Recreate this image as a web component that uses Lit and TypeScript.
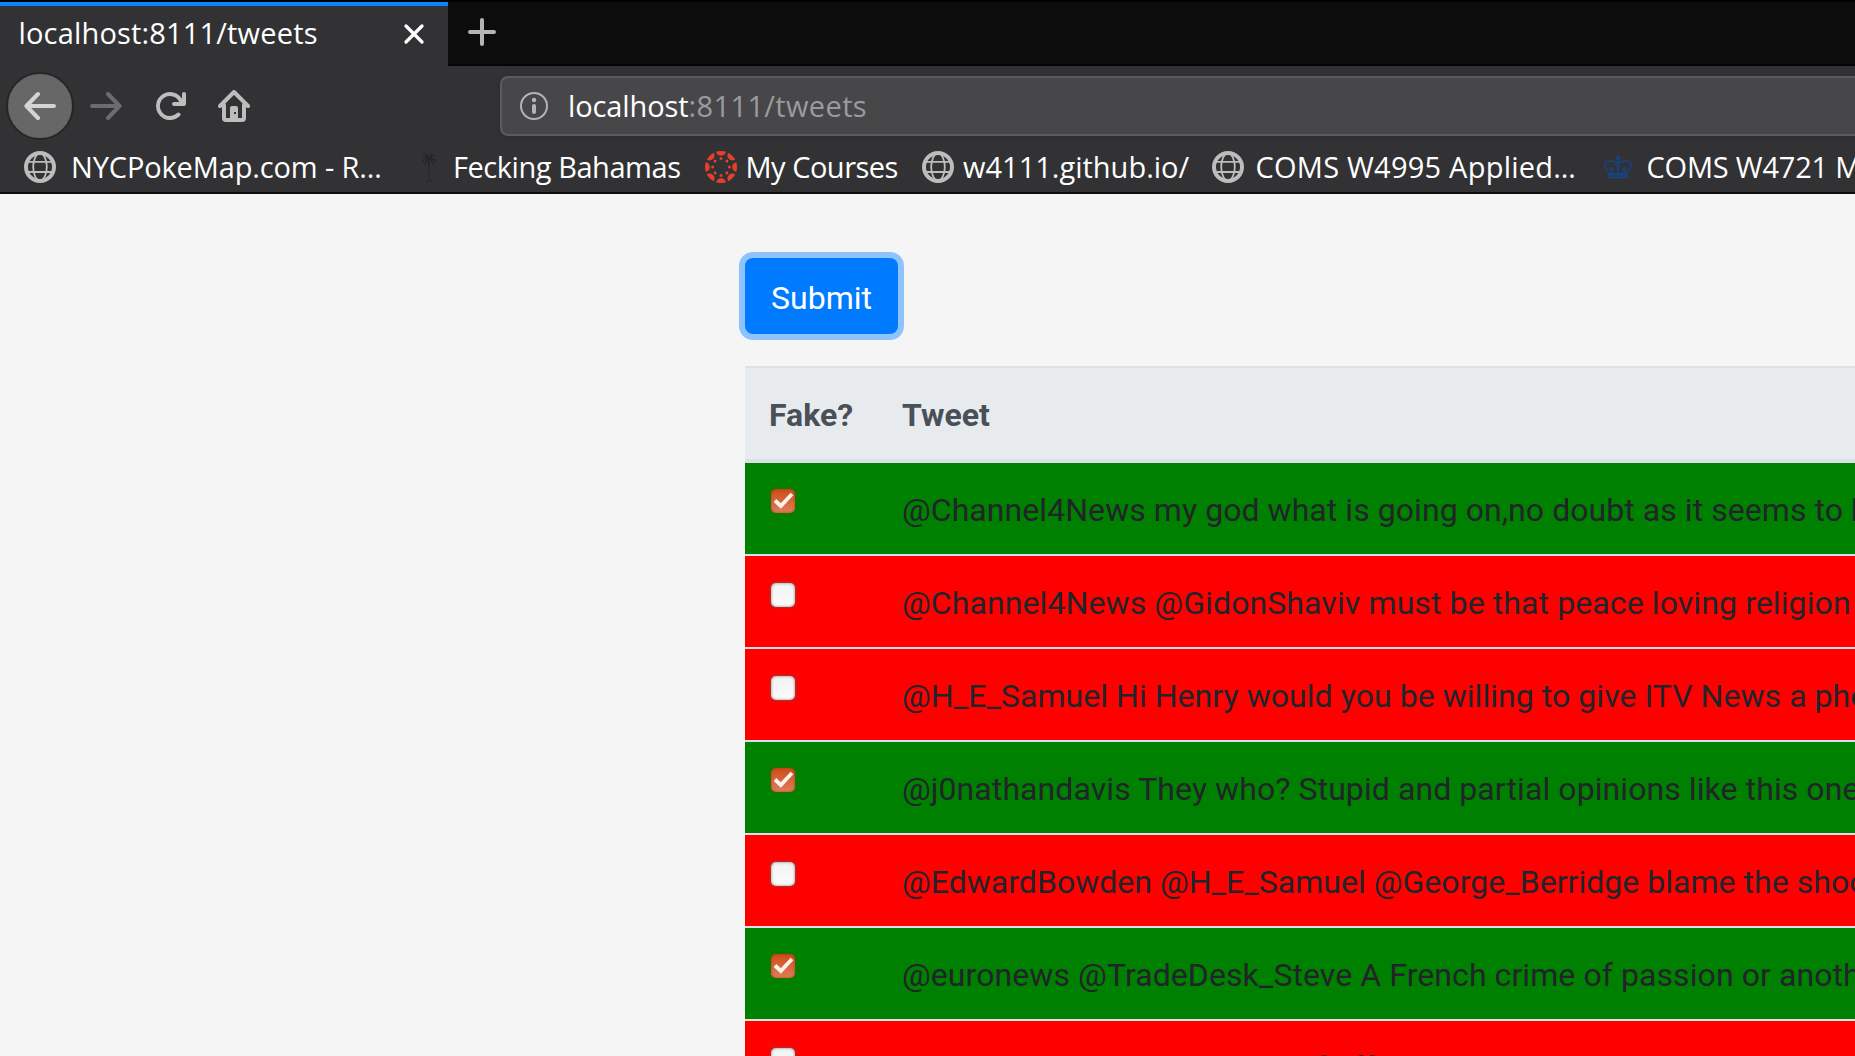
import { LitElement, html, svg, css, TemplateResult } from "lit";
import { customElement, property } from "lit/decorators.js";
import { classMap } from "lit/directives/class-map.js";

const globe = svg`
  <g fill="none" stroke="#bdbdbd">
    <circle cx="8" cy="8" r="7" stroke-width="2"/>
    <ellipse cx="8" cy="8" rx="3.4" ry="6.8" stroke-width=".9"/>
    <path d="M1.6 5.4h12.8M1.6 10.5h12.8" stroke-width=".9"/>
  </g>`;

const palm = svg`
  <g fill="none" stroke="#242425" stroke-linecap="round">
    <path d="M8 4.2C6.6 2.6 5.4 2.4 4.6 3.2M8 4.2C7 3.6 5.4 4 4.8 5.4M8 4.2C7 4.6 6 5.6 6 6.8M8 4.2C8 5 7.8 6 8.2 7M8 4.2C9 4.6 10.2 5.4 10.4 6.6M8 4.2C9.2 3.6 10.6 3.8 11.4 5M8 4.2C9 2.6 10.4 2 11.4 2.8M8 4.2C7.4 2.8 6.8 1.6 6 1.4M8 4.2C8.4 2.8 9 1.6 9.8 1.3" stroke-width=".6" stroke-dasharray="1 .4"/>
    <path d="M8.1 4.6C7.9 8 7.9 11 8.3 14.4M6.6 15.4Q8.2 13.6 9.8 15.4" stroke-width=".4"/>
  </g>`;

const around = [0, 45, 90, 135, 180, 225, 270, 315];
const ring = svg`
  <defs><clipPath id="disc"><circle cx="8" cy="8" r="8"/></clipPath></defs>
  <g fill="#e63f2e">
    <g clip-path="url(#disc)">
      ${around.map((a) => svg`<circle cx="8" cy="-.1" r="2.5" transform="rotate(${a} 8 8)"/>`)}
    </g>
    ${around.map((a) => svg`<circle cx="8" cy="3.8" r=".75" transform="rotate(${a} 8 8)"/>`)}
  </g>`;

const crown = svg`
  <g fill="none" stroke="#17447f" stroke-linejoin="round">
    <path d="M3.7 11.3C1.6 8.8 1 6.9 1.7 5.9c1-1.3 4.3-1.2 6.3.5 2-1.7 5.3-1.8 6.3-.5.7 1 .1 2.9-2 5.4z" stroke-width=".8"/>
    <path d="M8 5v6.2M6.7 7.7h2.6M4.8 8v3M3.6 9.2h2.4M11.2 8v3M10 9.2h2.4" stroke-width=".9"/>
    <path d="M8 2v3M6.8 3.4h2.4" stroke-width="1"/>
    <path d="M2.8 11.9h10.4M2.8 13.3h10.4" stroke-width="1"/>
  </g>`;

const arrow = svg`
  <path d="M2 8h13M7 2 1.2 8 7 14" fill="none" stroke="currentColor" stroke-width="2"
    stroke-linecap="round" stroke-linejoin="round"/>`;

const reload = svg`
  <path fill="currentColor" d="M15 1a1 1 0 0 0-1 1v2.418A6.995 6.995 0 1 0 8 15a6.954 6.954 0 0 0 4.95-2.05 1 1 0 0 0-1.414-1.414A5.019 5.019 0 1 1 12.549 6H10a1 1 0 0 0 0 2h5a1 1 0 0 0 1-1V2a1 1 0 0 0-1-1z"/>`;

const home = svg`
  <path fill="none" stroke="currentColor" stroke-width="2" stroke-linecap="round" stroke-linejoin="round"
    d="M1 8 8 1l7 7M3 7.5V14a1 1 0 0 0 1 1h8a1 1 0 0 0 1-1V7.5"/>
  <path fill="currentColor" fill-rule="evenodd" d="M6 15V9a1 1 0 0 1 1-1h2a1 1 0 0 1 1 1v6zM8 11v1h1v-1z"/>`;

const icon = (body: unknown) => html`<svg class="icon" viewBox="0 0 16 16" aria-hidden="true">${body}</svg>`;

interface Bookmark {
  label: string;
  icon: unknown;
  width: number;
  gap: number;
  spacing: number;
}

const bookmarks: Bookmark[] = [
  { label: "NYCPokeMap.com - R…", icon: globe, width: 389, gap: 15, spacing: -0.14 },
  { label: "Fecking Bahamas", icon: palm, width: 292, gap: 8, spacing: -0.45 },
  { label: "My Courses", icon: ring, width: 217, gap: 8.5, spacing: -0.5 },
  { label: "w4111.github.io/", icon: globe, width: 290, gap: 9, spacing: 0 },
  { label: "COMS W4995 Applied…", icon: globe, width: 390, gap: 11.5, spacing: 0.24 },
  { label: "COMS W4721 M", icon: crown, width: 253, gap: 12.5, spacing: -0.2 },
];

@customElement("browser-chrome")
export class BrowserChrome extends LitElement {
  static styles = css`
    :host {
      display: block;
      font: 29px/40px "Open Sans", "Noto Sans", sans-serif;
      color: #fff;
      background: #323234;
      white-space: nowrap;
    }
    .icon { display: block; width: 32px; height: 32px; flex: none; }
    .tabs {
      display: flex;
      align-items: stretch;
      height: 64px;
      padding-top: 2px;
      background: linear-gradient(#000 2px, #0c0c0d 2px, #0c0c0d 64px, #050506 64px);
    }
    .tab {
      box-sizing: border-box;
      width: 448px;
      display: flex;
      align-items: center;
      justify-content: space-between;
      padding: 0 22px 6px 18.5px;
      border-top: 4px solid #0a84ff;
      background: #323234;
      letter-spacing: 0.17px;
    }
    .close { width: 24px; height: 24px; margin-top: 1px; }
    .plus { width: 32px; height: 32px; margin: 14px 0 0 18px; }
    .nav { display: flex; align-items: center; height: 80px; color: #bdbdbd; }
    .back {
      box-sizing: border-box;
      width: 68px;
      height: 68px;
      margin-left: 6px;
      display: grid;
      place-items: center;
      border: 2px solid #262627;
      border-radius: 50%;
      background: #676768;
      color: #d4d4d5;
    }
    .forward { margin-left: 16px; color: #6c6c6e; transform: scaleX(-1); }
    .reload { margin-left: 32px; }
    .home { margin-left: 32px; }
    .url {
      box-sizing: border-box;
      flex: 1;
      height: 60px;
      margin-left: 250px;
      padding-left: 18px;
      display: flex;
      align-items: center;
      border: 2px solid #5b5b5d;
      border-right: 0;
      border-radius: 8px 0 0 8px;
      background: #474749;
      box-shadow: 0 1px 6px rgba(0, 0, 0, 0.15);
      color: #9b9b9d;
    }
    .info { width: 28px; height: 28px; margin-right: 20px; }
    .host { color: #fff; letter-spacing: -0.1px; }
    .path { letter-spacing: 0.36px; }
    .bookmarks {
      box-sizing: border-box;
      height: 48px;
      padding: 0 0 4px 24px;
      display: flex;
      align-items: center;
      overflow: hidden;
      border-bottom: 2px solid #0c0c0d;
    }
    .bookmark { display: flex; align-items: center; flex: none; overflow: hidden; }
  `;

  render() {
    return html`
      <div class="tabs">
        <div class="tab">
          <span>localhost:8111/tweets</span>
          <svg class="close" viewBox="0 0 24 24">
            <path d="M4 4l16 16M20 4 4 20" stroke="#fff" stroke-width="3.3" stroke-linecap="round"/>
          </svg>
        </div>
        <svg class="plus" viewBox="0 0 32 32">
          <path d="M16 4v24M4 16h24" stroke="#b4b4b5" stroke-width="4" stroke-linecap="round"/>
        </svg>
      </div>
      <div class="nav">
        <div class="back">${icon(arrow)}</div>
        <div class="forward">${icon(arrow)}</div>
        <div class="reload">${icon(reload)}</div>
        <div class="home">${icon(home)}</div>
        <div class="url">
          <svg class="info" viewBox="0 0 28 28">
            <circle cx="14" cy="14" r="13" fill="none" stroke="#b4b4b5" stroke-width="2"/>
            <circle cx="14" cy="8" r="2.2" fill="#b4b4b5"/>
            <path d="M14 14v6" stroke="#b4b4b5" stroke-width="4" stroke-linecap="round"/>
          </svg>
          <span class="host">localhost</span><span class="path">:8111/tweets</span>
        </div>
      </div>
      <div class="bookmarks">
        ${bookmarks.map(
          (b) => html`<div class="bookmark" style="width:${b.width}px;gap:${b.gap}px;letter-spacing:${b.spacing}px">
            ${icon(b.icon)}<span>${b.label}</span>
          </div>`
        )}
      </div>
    `;
  }
}

@customElement("fake-check")
export class FakeCheck extends LitElement {
  @property({ type: Boolean }) checked = false;

  static styles = css`
    :host { display: block; width: 24px; height: 24px; }
    .box {
      box-sizing: border-box;
      width: 24px;
      height: 24px;
      margin-top: 1px;
      border-radius: 5px;
      background: linear-gradient(#f2f2f2, #fcfcfc);
      box-shadow: 0 0 2px 1px rgba(110, 90, 80, 0.6), inset 0 0 3px rgba(80, 80, 80, 0.7);
    }
    .on {
      margin-top: 0;
      background: linear-gradient(#d04c16, #e07e58);
      box-shadow: 0 0 2px rgba(150, 60, 20, 0.8), inset 0 0 3px rgba(130, 50, 20, 0.6);
    }
    .tick { display: block; width: 24px; height: 24px; }
  `;

  render(): TemplateResult {
    return html`<div class=${classMap({ box: true, on: this.checked })}>
      ${this.checked
        ? html`<svg class="tick" viewBox="0 0 24 24">
            <path d="M4 11.5 9.8 17 21 5" fill="none" stroke="#fbf3ef" stroke-width="3.8" stroke-linejoin="miter"/>
          </svg>`
        : null}
    </div>`;
  }
}

interface Tweet {
  text: string;
  fake: boolean;
  spacing: number;
}

const tweets: Tweet[] = [
  { fake: true, spacing: 0.06, text: "@Channel4News my god what is going on,no doubt as it seems to be" },
  { fake: false, spacing: 0.1, text: "@Channel4News @GidonShaviv must be that peace loving religion" },
  { fake: false, spacing: 0.05, text: "@H_E_Samuel Hi Henry would you be willing to give ITV News a phone" },
  { fake: true, spacing: 0.08, text: "@j0nathandavis They who? Stupid and partial opinions like this one" },
  { fake: false, spacing: 0.03, text: "@EdwardBowden @H_E_Samuel @George_Berridge blame the shooter" },
  { fake: true, spacing: 0.08, text: "@euronews @TradeDesk_Steve A French crime of passion or another" },
  { fake: false, spacing: 0, text: "@Channel4News members of off" },
];

@customElement("app-root")
export class AppRoot extends LitElement {
  static styles = css`
    :host {
      display: block;
      height: 1056px;
      overflow: hidden;
      background: #f5f5f5;
      font: 32px/48px Roboto, sans-serif;
      color: #212529;
    }
    .page { padding: 64px 0 0 745px; }
    .submit {
      display: block;
      box-sizing: border-box;
      width: 153px;
      height: 76px;
      margin: 0 0 32px;
      padding: 3px 0 0;
      border: 0;
      border-radius: 8px;
      background: #007bff;
      box-shadow: 0 0 0 6px #8fc3fb;
      color: #fff;
      font: inherit;
      text-align: center;
    }
    .row {
      display: grid;
      grid-template-columns: 109px 1fr;
      box-sizing: border-box;
      height: 93px;
      padding-left: 24px;
      border-top: 2px solid #dee2e6;
      background: #f00;
      white-space: nowrap;
      overflow: hidden;
    }
    .row:nth-child(2) { border-top: 0; height: 91px; }
    .fake { background: #008000; }
    .row fake-check { margin: 26px 0 0 2px; }
    .text { padding: 23px 0 0 24px; }
    .head {
      height: 97px;
      border-bottom: 4px solid #dcdfe5;
      background: #e8ebee;
      color: #495057;
      font-weight: 700;
    }
    .head .label { padding-top: 23px; }
    .head .label + .label { padding-left: 24px; }
  `;

  render() {
    return html`
      <browser-chrome></browser-chrome>
      <main class="page">
        <button class="submit">Submit</button>
        <div class="table">
          <div class="row head">
            <div class="label">Fake?</div>
            <div class="label">Tweet</div>
          </div>
          ${tweets.map(
            (t) => html`<div class=${classMap({ row: true, fake: t.fake })}>
              <fake-check ?checked=${t.fake}></fake-check>
              <div class="text" style="letter-spacing:${t.spacing}px">${t.text}</div>
            </div>`
          )}
        </div>
      </main>
    `;
  }
}
